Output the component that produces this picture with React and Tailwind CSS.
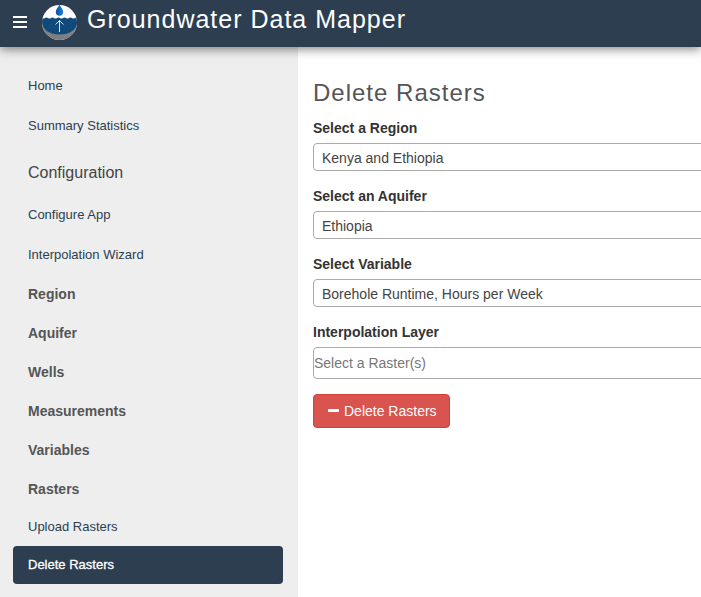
import React from "react";

const topLinks = ["Home", "Summary Statistics"];
const configLinks = ["Configure App", "Interpolation Wizard"];
const groups = ["Region", "Aquifer", "Wells", "Measurements", "Variables", "Rasters"];

const fields = [
  { id: "region", label: "Select a Region", value: "Kenya and Ethiopia" },
  { id: "aquifer", label: "Select an Aquifer", value: "Ethiopia" },
  { id: "variable", label: "Select Variable", value: "Borehole Runtime, Hours per Week" },
];

function Logo() {
  return (
    <svg viewBox="0 0 36 36" className="size-9 shrink-0" aria-hidden="true">
      <defs>
        <clipPath id="disc">
          <circle cx="17.5" cy="18.5" r="17.5" />
        </clipPath>
        <linearGradient id="drop" x1="0" x2="1">
          <stop offset="0" stopColor="#0b4f9c" />
          <stop offset="1" stopColor="#1683dc" />
        </linearGradient>
      </defs>
      <g clipPath="url(#disc)">
        <rect width="36" height="36" fill="#fff" />
        <rect y="17" width="36" height="19" fill="#7d7f82" />
        <path
          d="M0 14q1.5 1 3 0t3 0 3 0 3 0 3 0 3 0 3 0 3 0 3 0 3 0 3 0 3 0V17C35 26 27 30.500 17.500 30.500S0 26 0 17z"
          fill="#10497a"
        />
        <path d="M17.500 0c.5 3 3.700 4.500 3.700 8a3.700 3.700 0 0 1-7.400 0c0-3.500 3.200-5 3.700-8z" fill="url(#drop)" />
        <path d="M17.500 28V16.500M13.500 20.500l4-4 4 4" fill="none" stroke="#d5e3ed" strokeWidth="1" />
      </g>
    </svg>
  );
}

function NavLink({ children, active }) {
  return (
    <a
      href="#"
      aria-current={active ? "page" : undefined}
      className={
        active
          ? "flex h-[38px] items-center rounded bg-[#2c3e50] px-[15px] text-[13px] text-white [-webkit-text-stroke:0.3px_white]"
          : "flex h-[38px] items-center rounded px-[15px] text-[13px] text-[#2c3e50]"
      }
    >
      {children}
    </a>
  );
}

export default function App() {
  return (
    <div className="flex min-h-screen flex-col overflow-hidden bg-white font-['Liberation_Sans',Arial,sans-serif] text-sm text-[#333]">
      <header className="relative z-10 flex h-[47px] items-center bg-[#2c3e50] px-3 pb-[3px] shadow-[0_2px_10px_rgba(0,0,0,0.5)]">
        <button type="button" aria-label="Toggle navigation" className="mr-[14px] flex w-4 flex-col gap-[3px] px-px">
          <span className="h-[2px] w-[14px] bg-white" />
          <span className="h-[2px] w-[14px] bg-white" />
          <span className="h-[2px] w-[14px] bg-white" />
        </button>
        <Logo />
        <a href="#" className="ml-[9px] pb-[6px] text-[25px] leading-8 tracking-[1px] whitespace-nowrap text-white">
          Groundwater Data Mapper
        </a>
      </header>

      <div className="flex grow">
        <nav className="w-[298px] shrink-0 bg-[#eee] px-[13px] pt-5 pr-[15px] pb-[13px]">
          <ul className="flex flex-col gap-[2px]">
            {topLinks.map((t) => (
              <li key={t}>
                <NavLink>{t}</NavLink>
              </li>
            ))}
          </ul>
          <h2 className="mt-[10px] mb-[5px] flex h-9 items-center px-[15px] text-base text-[#444]">Configuration</h2>
          <ul className="flex flex-col gap-[2px]">
            {configLinks.map((t) => (
              <li key={t}>
                <NavLink>{t}</NavLink>
              </li>
            ))}
          </ul>
          <ul className="mt-px flex flex-col gap-px">
            {groups.map((t) => (
              <li key={t}>
                <button type="button" className="flex h-[38px] w-full items-center px-[15px] text-sm font-bold text-[#555]">
                  {t}
                </button>
                {t === "Rasters" && (
                  <ul>
                    <li>
                      <NavLink>Upload Rasters</NavLink>
                    </li>
                    <li>
                      <NavLink active>Delete Rasters</NavLink>
                    </li>
                  </ul>
                )}
              </li>
            ))}
          </ul>
        </nav>

        <main className="min-w-[480px] grow px-[15px] pt-[30px]">
          <h1 className="text-2xl tracking-[1px] text-[#555]">Delete Rasters</h1>
          <form className="mt-[9px]">
            {fields.map((f) => (
              <div key={f.id} className="mb-[15px]">
                <label htmlFor={f.id} className="mb-[5px] block font-bold leading-5">
                  {f.label}
                </label>
                <select
                  id={f.id}
                  className="block h-7 w-full appearance-none rounded border border-[#aaa] bg-white px-2 pt-px text-sm text-[#444]"
                >
                  <option>{f.value}</option>
                </select>
              </div>
            ))}
            <div className="mb-[15px]">
              <label htmlFor="layer" className="mb-[5px] block font-bold leading-5">
                Interpolation Layer
              </label>
              <input
                id="layer"
                type="text"
                placeholder="Select a Raster(s)"
                className="block h-8 w-full rounded border border-[#aaa] bg-white text-sm placeholder:text-[#777]"
              />
            </div>
            <button
              type="button"
              className="flex h-[34px] items-center gap-1 rounded border border-[#d43f3a] bg-[#d9534f] px-3 text-sm text-white"
            >
              <svg viewBox="0 0 14 14" className="size-[14px]" aria-hidden="true">
                <rect x="2" y="5" width="11" height="3" rx="0.5" fill="currentColor" />
              </svg>
              Delete Rasters
            </button>
          </form>
        </main>
      </div>
    </div>
  );
}
